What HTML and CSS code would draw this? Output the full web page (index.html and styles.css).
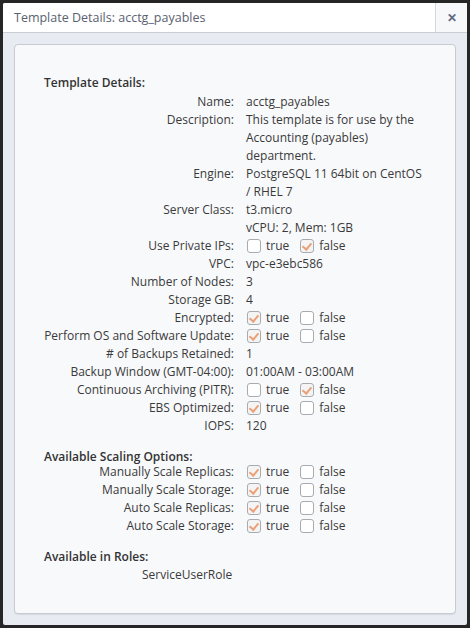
FILE: index.html
```html
<!DOCTYPE html>
<html>
<head>
<meta charset="utf-8">
<link rel="stylesheet" href="styles.css">
</head>
<body>
<div class="dialog">
  <div class="header">
    <div class="title">Template Details: acctg_payables</div>
    <div class="close">&#x2715;</div>
  </div>
  <div class="body">
    <div class="panel">
      <div class="section">
        <div class="heading">Template Details:</div>
        <div class="grid">
          <div class="lbl">Name:</div><div class="val">acctg_payables</div>
          <div class="lbl">Description:</div><div class="val">This template is for use by the Accounting (payables) department.</div>
          <div class="lbl">Engine:</div><div class="val">PostgreSQL 11 64bit on CentOS / RHEL 7</div>
          <div class="lbl">Server Class:</div><div class="val">t3.micro<br>vCPU: 2, Mem: 1GB</div>
          <div class="lbl">Use Private IPs:</div><div class="val opts"><span class="cb"></span>true<span class="cb on"></span>false</div>
          <div class="lbl">VPC:</div><div class="val">vpc-e3ebc586</div>
          <div class="lbl">Number of Nodes:</div><div class="val">3</div>
          <div class="lbl">Storage GB:</div><div class="val">4</div>
          <div class="lbl">Encrypted:</div><div class="val opts"><span class="cb on"></span>true<span class="cb"></span>false</div>
          <div class="lbl">Perform OS and Software Update:</div><div class="val opts"><span class="cb on"></span>true<span class="cb"></span>false</div>
          <div class="lbl"># of Backups Retained:</div><div class="val">1</div>
          <div class="lbl">Backup Window (GMT-04:00):</div><div class="val">01:00AM - 03:00AM</div>
          <div class="lbl">Continuous Archiving (PITR):</div><div class="val opts"><span class="cb"></span>true<span class="cb on"></span>false</div>
          <div class="lbl">EBS Optimized:</div><div class="val opts"><span class="cb on"></span>true<span class="cb"></span>false</div>
          <div class="lbl">IOPS:</div><div class="val">120</div>
        </div>
      </div>
      <div class="section">
        <div class="heading tight">Available Scaling Options:</div>
        <div class="grid">
          <div class="lbl">Manually Scale Replicas:</div><div class="val opts"><span class="cb on"></span>true<span class="cb"></span>false</div>
          <div class="lbl">Manually Scale Storage:</div><div class="val opts"><span class="cb on"></span>true<span class="cb"></span>false</div>
          <div class="lbl">Auto Scale Replicas:</div><div class="val opts"><span class="cb on"></span>true<span class="cb"></span>false</div>
          <div class="lbl">Auto Scale Storage:</div><div class="val opts"><span class="cb on"></span>true<span class="cb"></span>false</div>
        </div>
      </div>
      <div class="section">
        <div class="heading roles-h">Available in Roles:</div>
        <div class="roles">ServiceUserRole</div>
      </div>
    </div>
  </div>
</div>
</body>
</html>
```

FILE: styles.css
```css
html, body {
  margin: 0;
  padding: 0;
  background: #262626;
  width: 470px;
  height: 628px;
  overflow: hidden;
}
body {
  font-family: "Open Sans", "Liberation Sans", sans-serif;
  font-size: 12px;
  color: #3a3a3a;
}
.dialog {
  margin: 3px 3px 0 3px;
  width: 464px;
  height: 622px;
  background: #e8ebf1;
  border-radius: 2px;
  display: flex;
  flex-direction: column;
}
.header {
  height: 29px;
  background: #fff;
  border-bottom: 1px solid #c9cdd4;
  display: flex;
  align-items: stretch;
  border-radius: 2px 2px 0 0;
}
.title {
  flex: 1;
  padding-left: 11px;
  font-size: 12.5px;
  line-height: 29px;
  color: #5a6170;
}
.close {
  width: 31px;
  border-left: 1px solid #d4d8de;
  background: #f7f8fa;
  color: #5d6a80;
  font-size: 12px;
  font-weight: bold;
  text-align: center;
  line-height: 29px;
}
.body {
  flex: 1;
  padding: 11px 11px 11px 11px;
  display: flex;
}
.panel {
  flex: 1;
  background: #f8f9fb;
  border: 1px solid #c8ccd2;
  border-radius: 4px;
  box-shadow: 0 1px 1px rgba(0,0,0,0.08);
  padding: 29px 29px 0 29px;
}
.section + .section {
  margin-top: 13px;
}
.heading {
  font-weight: 600;
  line-height: 18px;
  color: #333;
  margin-bottom: 1px;
}
.heading.tight {
  margin-bottom: -3px;
}
.heading.roles-h {
  margin-bottom: 0;
}
.grid {
  display: grid;
  grid-template-columns: 190px 178px;
  column-gap: 12px;
  line-height: 18px;
}
.lbl {
  text-align: right;
  white-space: nowrap;
}
.val {
  color: #3a3a3a;
}
.opts {
  display: flex;
  align-items: center;
  height: 18px;
}
.cb {
  width: 14px;
  height: 14px;
  box-sizing: border-box;
  border: 1px solid #a8abb0;
  border-radius: 3px;
  background: #fff;
  margin: 0 5px 0 1px;
  position: relative;
}
.opts .cb:nth-of-type(2) {
  margin-left: 11px;
}
.cb.on {
  background: #f4f4f4;
}
.cb.on::after {
  content: "";
  position: absolute;
  left: 3px;
  top: 1px;
  width: 4px;
  height: 7px;
  border-right: 2px solid #eba07a;
  border-bottom: 2px solid #eba07a;
  transform: rotate(40deg);
}
.roles {
  padding-left: 98px;
  line-height: 18px;
}
```
